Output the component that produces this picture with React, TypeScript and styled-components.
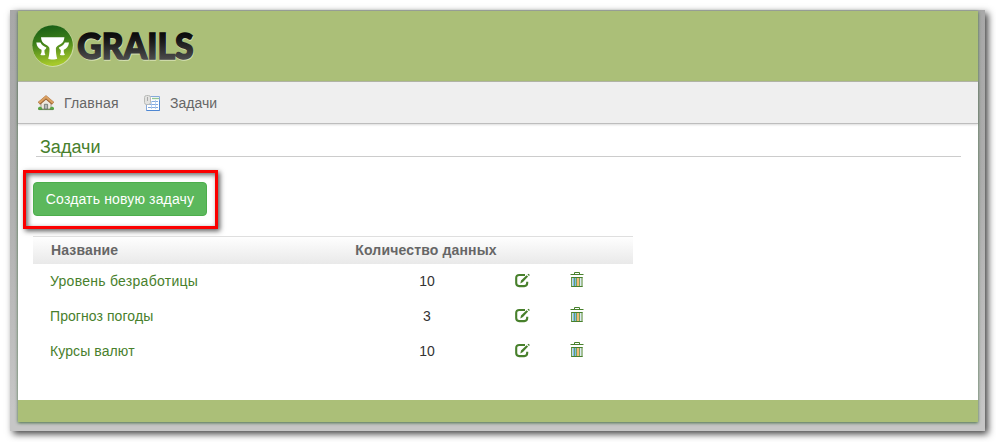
import React from "react";
import styled, { createGlobalStyle } from "styled-components";

const GlobalStyle = createGlobalStyle`
  * { box-sizing: border-box; }
  body { margin: 0; background: #fff; color: #333; font: 14px/20px "Liberation Sans", Arial, sans-serif; }
`;

const Screen = styled.div`
  height: 442px;
  padding: 10px 11px 11px 10px;
  overflow: hidden;
`;

const Frame = styled.div`
  height: 421px;
  padding: 1px 7px 9px 8px;
  background: linear-gradient(#a8a8a8, #adadad 40%, #c6c6c6 95%);
  box-shadow: 3px 3px 7px 0 rgba(0, 0, 0, 0.75);
`;

const Page = styled.div`
  display: flex;
  flex-direction: column;
  height: 411px;
  background: #fff;
  box-shadow: 0 1px 3px rgba(40, 90, 40, 0.8);
`;

const Header = styled.header`
  height: 70px;
  padding: 3px 0 0 12px;
  background: #abbf78;
`;

const Nav = styled.nav`
  display: flex;
  align-items: center;
  height: 43px;
  padding: 0 0 0 20px;
  background: #efefef;
  border-top: 1px solid #b0b3a5;
  border-bottom: 1px solid #bdbdbd;
  box-shadow: 0 1px 2px rgba(0, 0, 0, 0.14);
`;

const NavLink = styled.a<{ $width: number; $spacing?: number }>`
  display: flex;
  align-items: center;
  gap: 10px;
  width: ${(p) => p.$width}px;
  color: #666;
  letter-spacing: ${(p) => p.$spacing ?? 0}px;
`;

const Content = styled.main`
  flex: 1;
  padding: 12px 17px 0 15px;
`;

const Title = styled.h1`
  height: 21px;
  margin: 0 0 0 3px;
  padding: 1px 0 0 4px;
  border-bottom: 1px solid #ccc;
  color: #48802c;
  font-size: 18px;
  font-weight: 400;
  line-height: 20px;
`;

const Highlight = styled.div`
  width: 195px;
  height: 59px;
  margin: 13px 0 7px -10px;
  padding: 9px 7px;
  border: 3px solid #fb0000;
  box-shadow: 2px 2px 5px rgba(0, 0, 0, 0.65), inset 2px 2px 5px rgba(0, 0, 0, 0.6);
`;

const CreateButton = styled.button`
  display: block;
  width: 174px;
  height: 34px;
  padding: 0;
  border: 1px solid #4cae4c;
  border-radius: 4px;
  background: #5cb85c;
  color: #fff;
  font: inherit;
  letter-spacing: 0.15px;
`;

const Table = styled.table`
  width: 600px;
  border-collapse: collapse;
  table-layout: fixed;
`;

const HeadCell = styled.th<{ $center?: boolean }>`
  height: 28px;
  padding: 0 ${(p) => (p.$center ? 1 : 0)}px 0 ${(p) => (p.$center ? 0 : 18)}px;
  background: linear-gradient(#fff, #e9e9e9);
  box-shadow: inset 0 1px #dfdfdf;
  color: #666;
  letter-spacing: 0.15px;
  text-align: ${(p) => (p.$center ? "center" : "left")};
`;

const Cell = styled.td<{ $center?: boolean }>`
  height: 35px;
  padding: 0 0 2px ${(p) => (p.$center ? 1 : 17)}px;
  text-align: ${(p) => (p.$center ? "center" : "left")};
`;

const TaskLink = styled.a<{ $spacing: number }>`
  color: #48802c;
  letter-spacing: ${(p) => p.$spacing}px;
`;

const IconLink = styled.a`
  display: block;
  height: 16px;
  margin: -1px 0 0 -2px;
`;

const Footer = styled.footer`
  height: 22px;
  background: #abbf78;
`;

const Drawing = styled.svg`
  display: block;
  flex: none;
`;

const Wordmark = styled.text`
  font: 900 35.5px Lato, "Open Sans", sans-serif;
  stroke-linejoin: miter;
`;

const Logo = () => (
  <Drawing width="180" height="64" viewBox="30 14 180 64">
    <defs>
      <linearGradient id="disc" x1="0" y1="0" x2="0.15" y2="1">
        <stop offset="0" stopColor="#145a16" />
        <stop offset="0.45" stopColor="#3b7d18" />
        <stop offset="1" stopColor="#a6c92b" />
      </linearGradient>
      <linearGradient id="word" gradientUnits="userSpaceOnUse" x1="0" y1="32" x2="0" y2="61">
        <stop offset="0" stopColor="#080808" />
        <stop offset="0.35" stopColor="#1c1c1c" />
        <stop offset="1" stopColor="#505050" />
      </linearGradient>
    </defs>
    <circle cx="53" cy="46.2" r="20.7" fill="#d0dea9" />
    <circle cx="52.6" cy="45.6" r="20.3" fill="url(#disc)" />
    <g fill="#fff">
      <path d="M41 37.3h23.4c-.2 2.9-1.2 5.4-3.6 6.8-2.4 1.6-4.9 2.3-4.9 5 0 3.2.4 7.2 1.3 9.6-1.2 1-7.8 1-9 0 .9-2.4 1.3-6.4 1.3-9.6 0-2.7-2.5-3.4-4.9-5-2.4-1.4-3.4-3.9-3.6-6.8z" />
      <path d="M36.3 42.6h4.2c1.2 2.4 3 4 5.9 4.8-.2 1.2-.9 2-1.9 2.6-.1 2 .1 3.5.9 4.7-1 .8-4 .8-5 0 1-1.4 1.4-3 1.1-4.9-2.7-.9-4.8-3.1-5.2-7.2z" />
      <path d="M69 42.6h-4.2c-1.2 2.4-3 4-5.9 4.8.2 1.2.9 2 1.9 2.6.1 2-.1 3.5-.9 4.7 1 .8 4 .8 5 0-1-1.4-1.4-3-1.1-4.9 2.7-.9 4.8-3.1 5.2-7.2z" />
    </g>
    <Wordmark x="78" y="60.2" textLength="116" lengthAdjust="spacingAndGlyphs" fill="#d5e0b3" stroke="#d5e0b3" strokeWidth="1.5">GRAILS</Wordmark>
    <Wordmark x="77.2" y="59.4" textLength="116.5" lengthAdjust="spacingAndGlyphs" fill="url(#word)" stroke="url(#word)" strokeWidth="1.5">GRAILS</Wordmark>
  </Drawing>
);

const HomeIcon = () => (
  <Drawing width="16" height="16" viewBox="0 0 16 16">
    <path d="M3 8l5-5 5 5v6H3z" fill="#eee9df" stroke="#92826f" strokeWidth=".7" />
    <path d="M6.4 9.3h3.2V14H6.4z" fill="#b3b9b7" stroke="#686d68" strokeWidth=".8" />
    <path d="M1 8.4l7-6 7 6" fill="none" stroke="#9a6234" strokeWidth="3.4" />
    <path d="M1 7.9l7-6 7 6" fill="none" stroke="#daa062" strokeWidth="2.2" />
    <path d="M0 14.8v-2l2-1.4 2 1.4.5 2zm16 0v-2l-2-1.4-2 1.4-.5 2z" fill="#58a545" />
    <path d="M1 14.6h14" stroke="#567b43" strokeWidth=".8" />
  </Drawing>
);

const TasksIcon = () => (
  <Drawing width="16" height="16" viewBox="0 0 16 16">
    <path d="M3 1.5h12.5v14H2.5V9" fill="#fff" stroke="#86a9db" />
    <path d="M8 3.5h7" stroke="#93c795" strokeWidth="1.4" />
    <path d="M8 6.5h6M4 9.5h10M4 12.5h10" stroke="#83aae0" />
    <path d="M7.5 6v8M11.5 5v9" stroke="#a9c8ee" strokeWidth=".8" />
    <path d="M2.5 15.5h13v-10" fill="none" stroke="#4e87d2" />
    <rect x=".5" y=".5" width="6" height="9" rx="2" fill="#e2e2e0" stroke="#b8bab7" />
    <path d="M3.5 2v4" stroke="#aaa" />
  </Drawing>
);

const EditIcon = () => (
  <Drawing width="16" height="16" viewBox="0 -1 16 16">
    <path d="M10 2H4.2C2.3 2 1.2 3.2 1.2 5v5.1c0 2 1 3 3 3h5.1c2 0 2.9-1.1 2.9-3V8.7" fill="none" stroke="#48802c" strokeWidth="2.1" />
    <path d="M5.3 10.4l.7-2.9 5.5-5.3 1.6 1.4L8 8.9zM12.5 1.6l1-.9 1.4 1.2-.9 1z" fill="#48802c" />
  </Drawing>
);

const TrashIcon = () => (
  <Drawing width="14" height="16" viewBox="0 0 14 16">
    <path d="M4.5 2.5v-2h5v2M.5 2.5h13" fill="none" stroke="#48802c" />
    <path d="M2 5h10v9.5H2z" fill="#fff" />
    <path d="M3.5 6v8" stroke="#7dbdf0" strokeWidth="1.3" />
    <path d="M5.5 6v8" stroke="#76bdeb" strokeWidth="1.2" />
    <path d="M8 6v8" stroke="#edb467" strokeWidth="1.8" />
    <path d="M10.5 6v8" stroke="#dcecf3" />
    <path d="M1.5 5.5h11M1.5 14.5h11" stroke="#48802c" />
    <path d="M1.7 5v10M12 5v10" stroke="#48802c" />
    <path d="M4.5 6v8M6.5 6v8M9.5 6v8" stroke="#48802c" strokeWidth=".75" />
  </Drawing>
);

const tasks = [
  { name: "Уровень безработицы", count: 10, spacing: 0.27 },
  { name: "Прогноз погоды", count: 3, spacing: 0.07 },
  { name: "Курсы валют", count: 10, spacing: 0.1 },
];

export default function App() {
  return (
    <Screen>
      <GlobalStyle />
      <Frame>
        <Page>
          <Header><Logo /></Header>
          <Nav>
            <NavLink $width={106} $spacing={0.2}><HomeIcon />Главная</NavLink>
            <NavLink $width={100}><TasksIcon />Задачи</NavLink>
          </Nav>
          <Content>
            <Title>Задачи</Title>
            <Highlight><CreateButton>Создать новую задачу</CreateButton></Highlight>
            <Table>
              <colgroup>
                <col width="304" /><col width="179" /><col width="55" /><col width="62" />
              </colgroup>
              <thead>
                <tr><HeadCell>Название</HeadCell><HeadCell $center>Количество данных</HeadCell><HeadCell /><HeadCell /></tr>
              </thead>
              <tbody>
                {tasks.map((task) => (
                  <tr key={task.name}>
                    <Cell><TaskLink $spacing={task.spacing}>{task.name}</TaskLink></Cell>
                    <Cell $center>{task.count}</Cell>
                    <Cell $center><IconLink aria-label="Изменить"><EditIcon /></IconLink></Cell>
                    <Cell $center><IconLink aria-label="Удалить"><TrashIcon /></IconLink></Cell>
                  </tr>
                ))}
              </tbody>
            </Table>
          </Content>
          <Footer />
        </Page>
      </Frame>
    </Screen>
  );
}
